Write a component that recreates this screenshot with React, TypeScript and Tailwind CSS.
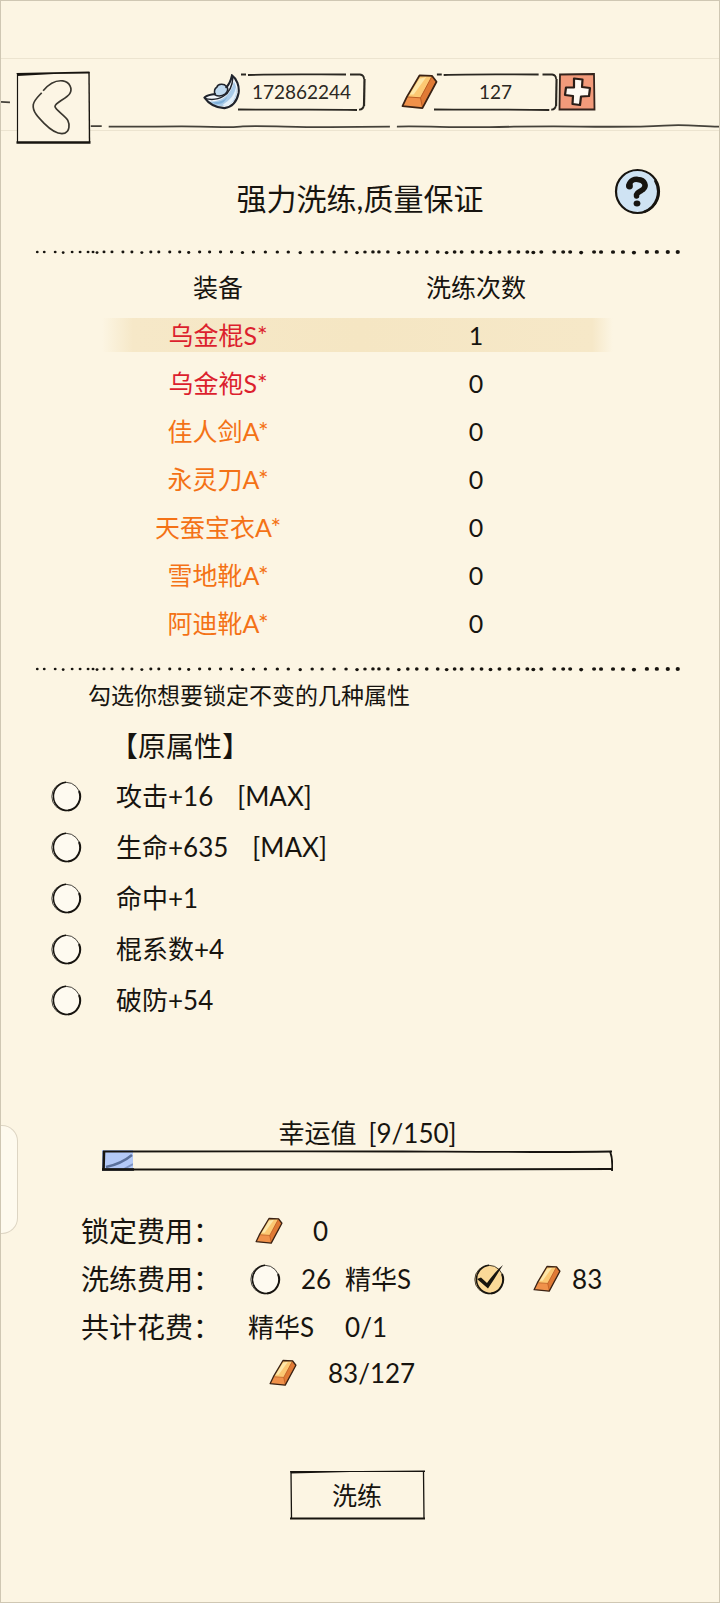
import React, { useState } from 'react';

const equipment = [
  { name: '乌金棍S*', count: 1, color: 'text-[#dc1f2e]' },
  { name: '乌金袍S*', count: 0, color: 'text-[#dc1f2e]' },
  { name: '佳人剑A*', count: 0, color: 'text-[#f47216]' },
  { name: '永灵刀A*', count: 0, color: 'text-[#f47216]' },
  { name: '天蚕宝衣A*', count: 0, color: 'text-[#f47216]' },
  { name: '雪地靴A*', count: 0, color: 'text-[#f47216]' },
  { name: '阿迪靴A*', count: 0, color: 'text-[#f47216]' },
];

const attributes = [
  { label: '攻击+16', max: true },
  { label: '生命+635', max: true },
  { label: '命中+1', max: false },
  { label: '棍系数+4', max: false },
  { label: '破防+54', max: false },
];

const dots = [
  36, 43, 54, 62, 71, 79, 87, 92, 96, 103, 111, 122, 131, 141, 150, 158, 169, 179, 188, 199, 209, 220, 231,
  242, 253, 265, 277, 288, 300, 312, 322, 334, 346, 357, 365, 373, 379, 388, 399, 408, 417, 427, 438, 447,
  455, 462, 473, 482, 491, 500, 510, 519, 528, 534, 542, 555, 564, 571, 582, 595, 602, 614, 624, 635, 648,
  658, 669, 679,
];

const DottedLine = ({ className }: { className: string }) => (
  <svg viewBox="0 0 720 8" className={`block w-full ${className}`} aria-hidden="true">
    {dots.map((x, i) => (
      <ellipse key={x} cx={x} cy={i % 5 === 3 ? 4.6 : 4} rx={1.4 + i / 90} ry={1.3 + i / 110} fill="#17140f" />
    ))}
  </svg>
);

const GoldBar = ({ className }: { className: string }) => (
  <svg viewBox="0 0 38 37" className={className} aria-hidden="true">
    <path d="M19 1.5 L32 2 L36.5 8 L22 35 L1.5 33 L6 23.5 Z" fill="#f0914a" />
    <path d="M19 1.5 L32 2 L20 24.5 L6 23.5 Z" fill="#fcc873" />
    <path d="M19 5 L26 3 L13 21 L9 21 Z" fill="#fde7a9" />
    <path d="M32 2 L36.5 8 L22 35 L20 24.5 Z" fill="#e07a35" />
    <path d="M6 23.5 L20 24.5 L32 2 M20 24.5 L22 34" fill="none" stroke="#b95a22" strokeWidth="1" />
    <path
      d="M19 1.5 L32 2 L36.5 8 L22 35 L1.5 33 L6 23.5 Z"
      fill="none"
      stroke="#3a2214"
      strokeWidth="1.8"
      strokeLinejoin="round"
    />
  </svg>
);

const SilverIngot = ({ className }: { className: string }) => (
  <svg viewBox="0 0 40 38" className={className} aria-hidden="true">
    <path
      d="M1 25 C3 22 9 22 13 21 C20 19 27 12 30 1.5 C35 5 38 13 37 20 C35 30 29 35 22 36 C13 36 5 31 1 25 Z"
      fill="#f4f8fb"
    />
    <path d="M5 29 C18 30 29 23 32 8 C36 15 36 23 32 28 C27 35 14 36 5 29 Z" fill="#a9cbe8" />
    <path d="M20 33 C24 29 32 26 34 14 C36 23 31 31 24 34 Z" fill="#e4f0f9" />
    <path d="M9 30 C16 30 22 28 25 24 C23 30 17 34 9 30 Z" fill="#7fb0d9" />
    <path
      d="M12 22 C11 18 12 15 14 14 C15 10 22 10 24 13 C27 15 25 19 23 21 C20 23 16 24 12 22 Z"
      fill="#bfd9ee"
      stroke="#20242c"
      strokeWidth="1.6"
    />
    <path d="M1.5 26 C15 29 30 24 31 3" fill="none" stroke="#20242c" strokeWidth="1.5" />
    <path
      d="M24 14 C27 11 29 6 30 1.5 C35 5 38 13 37 20 C35 30 29 35 22 36 C13 36 5 31 1 25 C3 22 9 22 12 21"
      fill="none"
      stroke="#20242c"
      strokeWidth="2.2"
      strokeLinecap="round"
    />
  </svg>
);

const Tick = ({
  type,
  name,
  label,
  checked,
  onChange,
}: {
  type: 'checkbox' | 'radio';
  name: string;
  label: string;
  checked: boolean;
  onChange: () => void;
}) => (
  <span className="relative block size-8 shrink-0">
    <svg viewBox="0 0 32 32" className="size-8" fill="none" stroke="#17140f" aria-hidden="true">
      <circle cx="16" cy="16.5" r="14.2" fill={checked ? '#fbd998' : '#fefaf0'} strokeWidth="0.8" />
      <path d="M18 30.6 A14.2 14.2 0 0 1 16 2.3" strokeWidth="1.5" />
      <path d="M29 11 A14.2 14.2 0 0 1 18 30.6" strokeWidth="2" />
      {checked && (
        <path d="M4 16 L8 14.5 L14 20 C19 13 24 7 30 2 C25 10 20 18 15 25.5 Z" fill="#17140f" stroke="none" />
      )}
    </svg>
    <input
      type={type}
      name={name}
      aria-label={label}
      checked={checked}
      onChange={onChange}
      className="absolute inset-0 size-8 cursor-pointer appearance-none rounded-full"
    />
  </span>
);

const Frame = () => (
  <svg
    viewBox="0 0 128 38"
    preserveAspectRatio="none"
    className="absolute inset-0 size-full"
    fill="none"
    stroke="#2b2822"
    strokeWidth="1.8"
    aria-hidden="true"
  >
    <path d="M3 1.5 L8 1.5 M10 2 C40 1 75 1.5 108 1.5 M112 1.5 L122 1.5 Q126 2 126 6" />
    <path d="M126.5 6 L126 33" strokeWidth="2.2" />
    <path d="M126 32 Q125 37 121 36.5 M119 37 C80 36 40 37 0 36.5" />
  </svg>
);

const Header = () => (
  <header className="relative flex h-[72px] items-start border-b border-[#ece4d0] pl-[15px] pr-4 pt-3">
    <svg
      viewBox="0 0 720 72"
      preserveAspectRatio="none"
      className="absolute inset-0 size-full"
      fill="none"
      stroke="#45423a"
      strokeWidth="1.8"
      aria-hidden="true"
    >
      <path d="M0 43.5 L9 44 M90 68 L101 68" />
      <path d="M108 68.5 C140 69 170 68 200 68.5 S225 70 240 68.5 S300 69.5 330 69 S370 68.5 390 68.5" />
      <path d="M397 68.5 C430 68 450 69.5 490 69 S540 68 580 68.5 S640 69 665 67.5 S700 68.5 720 68.5" />
    </svg>
    <button type="button" aria-label="返回" className="relative shrink-0 cursor-pointer">
      <svg viewBox="0 0 75 74" className="h-[73px] w-[75px]" fill="none" stroke="#17140f" aria-hidden="true">
        <path d="M1 2 L73 2 L74 73 L1 73 Z" fill="#fcf5e4" stroke="none" />
        <path d="M0 2 L74 0.5 L74 2.5 L38 3 L1 5 Z" fill="#17140f" stroke="none" />
        <path d="M1 2 L1 73" strokeWidth="1.2" />
        <path d="M73.5 1 L74 72" strokeWidth="1.4" />
        <path d="M0 72.5 L75 72.5" strokeWidth="2.6" />
        <path
          d="M27 20 C32 14 39 9 47 10 C54 11 57 18 54 23 C51 28 39 32 39 36 C39 39 50 46 52 50 C54 54 54 61 49 63 C42 65 33 58 28 53 C22 47 16 41 17 34 C18 29 23 25 25.5 22"
          stroke="#3a372f"
          strokeWidth="1.7"
        />
      </svg>
    </button>
    <div className="relative flex flex-1 items-center justify-center gap-[35px] pl-1 pt-0.5">
      <div className="flex items-center">
        <SilverIngot className="relative z-10 h-9 w-[39px]" />
        <div className="relative -ml-1 flex h-[38px] w-[128px] items-center justify-center">
          <Frame />
          <span className="text-[19px] text-[#2b2822]">172862244</span>
        </div>
      </div>
      <div className="flex items-center">
        <GoldBar className="relative z-10 h-9 w-[37px]" />
        <div className="relative -ml-1 flex h-[38px] w-[124px] items-center justify-center">
          <Frame />
          <span className="text-[19px] text-[#2b2822]">127</span>
        </div>
        <button type="button" aria-label="增加金条" className="cursor-pointer">
          <svg viewBox="0 0 38 38" className="size-[38px]" aria-hidden="true">
            <path d="M2 1.5 L36 1 L36.5 36.5 L1.5 36.5 Z" fill="#f29a7a" stroke="#33231c" strokeWidth="1.8" />
            <path
              d="M16 5.5 L24.5 6.5 L24 14 L32 15 L31 23 L23 23.5 L22 32 L14.5 31 L15 23 L7 22 L8 14.5 L16 14.5 Z"
              fill="#fefaf3"
              stroke="#2a1d17"
              strokeWidth="2.2"
              strokeLinejoin="round"
            />
          </svg>
        </button>
      </div>
    </div>
  </header>
);

export default function App() {
  const [locked, setLocked] = useState<string[]>([]);
  const [payment, setPayment] = useState('gold');

  const toggleLock = (label: string) =>
    setLocked(locked.includes(label) ? locked.filter((l) => l !== label) : [...locked, label]);

  return (
    <main className="relative min-h-screen border border-[#cfc7b3] bg-[#fcf5e3] font-['Lato','Noto_Sans_CJK_SC',sans-serif] text-[26px] leading-8 text-[#17140f]">
      <div className="h-[58px] border-b border-[#ece4d0]" />
      <Header />

      <div className="mt-[37px] grid grid-cols-[1fr_auto_1fr] items-start px-[58px]">
        <h1 className="col-start-2 pt-3 text-[30px] leading-9">强力洗练,质量保证</h1>
        <button type="button" aria-label="帮助" className="cursor-pointer justify-self-end">
          <svg viewBox="0 0 47 47" className="size-[47px]" fill="none" stroke="#17140f" aria-hidden="true">
            <circle cx="23.5" cy="23.5" r="21.5" fill="#cfe3f3" strokeWidth="2.2" />
            <path d="M41 12 C48 24 43 39 30 44" strokeWidth="2.6" />
            <path
              d="M15 17.5 C16 12 21 11 24 11.5 C31 12 33 18 29 21.5 C25 24 22 25 22.5 28"
              strokeWidth="5.5"
              strokeLinecap="round"
            />
            <circle cx="15.5" cy="18" r="3.4" fill="#17140f" stroke="none" />
            <ellipse cx="23" cy="35.5" rx="3.4" ry="2.9" fill="#17140f" stroke="none" />
          </svg>
        </button>
      </div>

      <DottedLine className="mt-8" />

      <div className="px-[101px]">
        <table className="mt-[7px] w-full table-fixed text-center text-[25px]">
          <thead>
            <tr className="h-12">
              <th className="w-[45%] p-0 font-normal">装备</th>
              <th className="w-[55%] p-0 font-normal">洗练次数</th>
            </tr>
          </thead>
          <tbody>
            {equipment.map((item, i) => (
              <tr
                key={item.name}
                className={
                  i === 0
                    ? 'h-12 bg-[linear-gradient(90deg,#fcf5e3,#f6e8c8_6%,#f5e6c3_50%,#f6e8c8_95%,#fcf5e3_99%)] bg-[length:100%_34px] bg-center bg-no-repeat'
                    : 'h-12'
                }
              >
                <td className={`p-0 ${item.color}`}>{item.name}</td>
                <td className="p-0">{item.count}</td>
              </tr>
            ))}
          </tbody>
        </table>
      </div>

      <DottedLine className="mt-[18px]" />

      <p className="mt-2.5 pl-[87px] text-[23px] leading-6">勾选你想要锁定不变的几种属性</p>
      <h2 className="mt-3.5 pl-[109px] text-[28px] leading-[50px]">【原属性】</h2>
      <ul className="pl-[49px]">
        {attributes.map((attr) => (
          <li key={attr.label} className="flex h-[51px] items-center">
            <Tick
              type="checkbox"
              name="lock"
              label={attr.label}
              checked={locked.includes(attr.label)}
              onChange={() => toggleLock(attr.label)}
            />
            <span className="ml-[34px]">{attr.label}</span>
            {attr.max && <span className="ml-6">[MAX]</span>}
          </li>
        ))}
      </ul>

      <section className="mt-[91px] pl-[101px] pr-[106px]">
        <div className="flex justify-center gap-3 pl-5">
          <span>幸运值</span>
          <span>[9/150]</span>
        </div>
        <div className="relative mt-px h-[21px]" role="progressbar" aria-label="幸运值" aria-valuenow={9} aria-valuemax={150}>
          <div className="h-full overflow-hidden bg-[#b4c9f7]" style={{ width: `${(9 / 150) * 100}%` }}>
            <svg viewBox="0 0 31 21" className="h-full w-[31px]" fill="none" aria-hidden="true">
              <path d="M4 17 Q19 14 30 5" stroke="#5b709b" strokeWidth="2.5" />
              <path d="M22 19 L31 14" stroke="#7f95c4" strokeWidth="2" />
            </svg>
          </div>
          <svg
            viewBox="0 0 510 21"
            preserveAspectRatio="none"
            className="absolute inset-0 size-full"
            fill="none"
            stroke="#17140f"
            aria-hidden="true"
          >
            <path d="M1 1.5 C120 2 200 1 300 1.5 S450 2.5 509 1.5" strokeWidth="1.8" />
            <path d="M2 1 L1.5 20" strokeWidth="2.6" />
            <path d="M507 1 Q510 9 509 21" strokeWidth="1.8" />
            <path d="M0 19.5 C150 18.5 350 20.5 510 19" strokeWidth="2" />
            <path d="M0 19.5 L32 19.5" strokeWidth="2.6" />
          </svg>
        </div>
      </section>

      <section className="mt-9 pl-20">
        <div className="flex h-12 items-center">
          <span className="w-[168px] text-[28px]">锁定费用：</span>
          <GoldBar className="ml-1.5 size-7" />
          <span className="ml-[30px]">0</span>
        </div>
        <div className="flex h-12 items-center">
          <span className="w-[168px] text-[28px]">洗练费用：</span>
          <Tick
            type="radio"
            name="payment"
            label="26 精华S"
            checked={payment === 'essence'}
            onChange={() => setPayment('essence')}
          />
          <span className="ml-5 w-11">26</span>
          <span>精华S</span>
          <span className="ml-[62px]">
            <Tick
              type="radio"
              name="payment"
              label="金条 83"
              checked={payment === 'gold'}
              onChange={() => setPayment('gold')}
            />
          </span>
          <GoldBar className="ml-7 size-7" />
          <span className="ml-[11px]">83</span>
        </div>
        <div className="flex h-12 items-center">
          <span className="w-[167px] text-[28px]">共计花费：</span>
          <span>精华S</span>
          <span className="ml-[31px]">0/1</span>
        </div>
        <div className="flex h-11 items-center pl-[188px]">
          <GoldBar className="size-7" />
          <span className="ml-[31px]">83/127</span>
        </div>
      </section>

      <div className="mt-[75px] flex justify-center pr-1.5">
        <button type="button" className="relative h-[50px] w-[135px] cursor-pointer text-[25px]">
          <svg
            viewBox="0 0 135 50"
            preserveAspectRatio="none"
            className="absolute inset-0 size-full"
            fill="none"
            stroke="#17140f"
            aria-hidden="true"
          >
            <path d="M0 1 L70 1 L135 0.5 L135 2 L60 2 L1 3.5 Z" fill="#17140f" stroke="none" />
            <path d="M1 1 L1.5 49 M133.5 1 L134 49" strokeWidth="1.3" />
            <path d="M0 48.5 L135 48.5" strokeWidth="2" />
          </svg>
          洗练
        </button>
      </div>

      {/* floating edge handle */}
      <div className="absolute left-0 top-[1124px] h-[109px] w-[17px] rounded-r-2xl border border-l-0 border-[#ddd5c3] bg-[#fefaee]" />
    </main>
  );
}
